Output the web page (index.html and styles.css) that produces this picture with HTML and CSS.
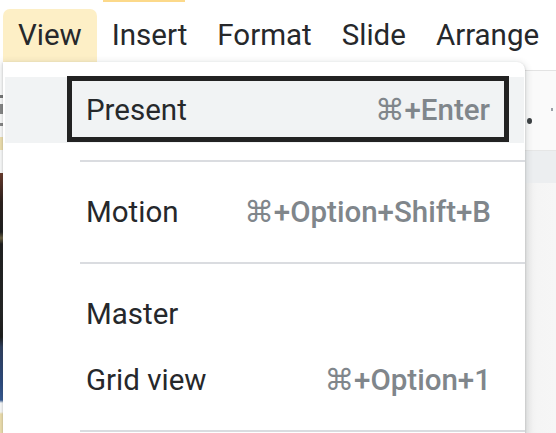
FILE: index.html
```html
<!DOCTYPE html>
<html>
<head>
<meta charset="utf-8">
<link rel="stylesheet" href="styles.css">
</head>
<body>
<div class="page">
  <div class="accent"></div>
  <nav class="menubar">
    <span class="menu active">View</span>
    <span class="menu">Insert</span>
    <span class="menu">Format</span>
    <span class="menu">Slide</span>
    <span class="menu">Arrange</span>
  </nav>
  <div class="workspace">
    <div class="filmstrip"></div>
    <div class="dropdown">
      <div class="item hover">
        <span class="label">Present</span><span class="shortcut"><span class="cmd">⌘</span>+Enter</span>
        <span class="callout"></span>
      </div>
      <div class="sep"></div>
      <div class="item">
        <span class="label">Motion</span><span class="shortcut"><span class="cmd">⌘</span>+Option+Shift+B</span>
      </div>
      <div class="sep"></div>
      <div class="item">
        <span class="label">Master</span>
      </div>
      <div class="item">
        <span class="label">Grid view</span><span class="shortcut"><span class="cmd">⌘</span>+Option+1</span>
      </div>
      <div class="sep"></div>
    </div>
    <div class="side">
      <div class="side-top"></div>
      <div class="toolbar"><span class="dot"></span><span class="tick"></span></div>
      <div class="ruler"></div>
      <div class="canvas"></div>
    </div>
  </div>
</div>
</body>
</html>
```
FILE: styles.css
```css
* { box-sizing: border-box; }
html, body { margin: 0; padding: 0; }
body {
  width: 556px;
  height: 433px;
  overflow: hidden;
  background: #fff;
  font-family: Roboto, "Liberation Sans", "DejaVu Sans", sans-serif;
  color: #202124;
}
.page { width: 556px; height: 433px; display: flex; flex-direction: column; }
.accent {
  margin-left: 103px;
  width: 82px;
  height: 2px;
  background: #fcd98a;
  flex: none;
}
.menubar {
  margin-top: 7px;
  height: 53px;
  padding-left: 3px;
  display: flex;
  flex: none;
}
.menu {
  padding: 0 15px;
  font-size: 29.5px;
  line-height: 53px;
  white-space: nowrap;
  color: #26282b;
}
.menu.active {
  background: #fdefc6;
  border-radius: 7px 7px 0 0;
}
.workspace {
  flex: 1;
  display: flex;
  min-height: 0;
}
.filmstrip {
  width: 3px;
  flex: none;
  background: linear-gradient(to bottom,
    #fff 0, #fff 33px, #777 33px, #777 36px, #fff 36px, #fff 42px, #888 42px, #888 52px, #fff 52px, #fff 61px, #888 61px, #888 64px, #fff 64px,
    #fff 75px, #f3e3b0 75px, #f3e3b0 88px, #fff 88px,
    #fff 111px, #6b3a2a 111px, #2a1d1a 140px, #1c1c1c 170px, #6a6040 176px, #1d1d1d 182px, #222 250px, #1a1a1a 275px, #2e3e5e 285px, #2b4a80 320px, #355a95 338px, #fff 341px, #fff 350px, #f3e3b0 352px, #f3e3b0 371px);
}
.dropdown {
  width: 522px;
  flex: none;
  background: #fff;
  border-radius: 0 8px 0 0;
  box-shadow: 0 2px 6px 2px rgba(60, 64, 67, 0.15), 0 1px 2px rgba(60, 64, 67, 0.3);
  padding-top: 15px;
  position: relative;
  z-index: 2;
}
.item {
  position: relative;
  height: 66px;
  display: flex;
  align-items: center;
  justify-content: space-between;
  padding: 0 34px 0 83px;
  font-size: 29.5px;
  line-height: 66px;
  white-space: nowrap;
}
.item.hover { background: #f1f3f4; margin: 0 1px 0 2px; padding-left: 81px; }
.label { color: #26282b; }
.shortcut {
  color: #80868b;
  font-weight: 500;
}
.cmd { font-weight: 400; }
.callout {
  position: absolute;
  left: 62px;
  right: 15px;
  top: -1px;
  bottom: 1px;
  border: 5px solid #222;
}
.sep {
  height: 2px;
  margin: 17px 0 17px 77px;
  background: #dadce0;
}
.side {
  flex: 1;
  display: flex;
  flex-direction: column;
}
.side-top { height: 8px; background: #fff; flex: none; }
.toolbar {
  height: 80px;
  flex: none;
  border-top: 1px solid #e3e3e3;
  background: #fafafa;
  position: relative;
}
.dot {
  position: absolute;
  left: 2px;
  top: 47px;
  width: 5px;
  height: 6px;
  border-radius: 50%;
  background: #3c4043;
}
.tick {
  position: absolute;
  left: 26px;
  top: 37px;
  width: 2px;
  height: 3px;
  background: #9aa0a6;
}
.ruler {
  height: 33px;
  flex: none;
  border-top: 1px solid #e6e6e6;
  background: #eceef0;
}
.canvas {
  flex: 1;
  background: linear-gradient(to right, #ededed, #f5f5f5 12px, #f6f6f6);
}
```
